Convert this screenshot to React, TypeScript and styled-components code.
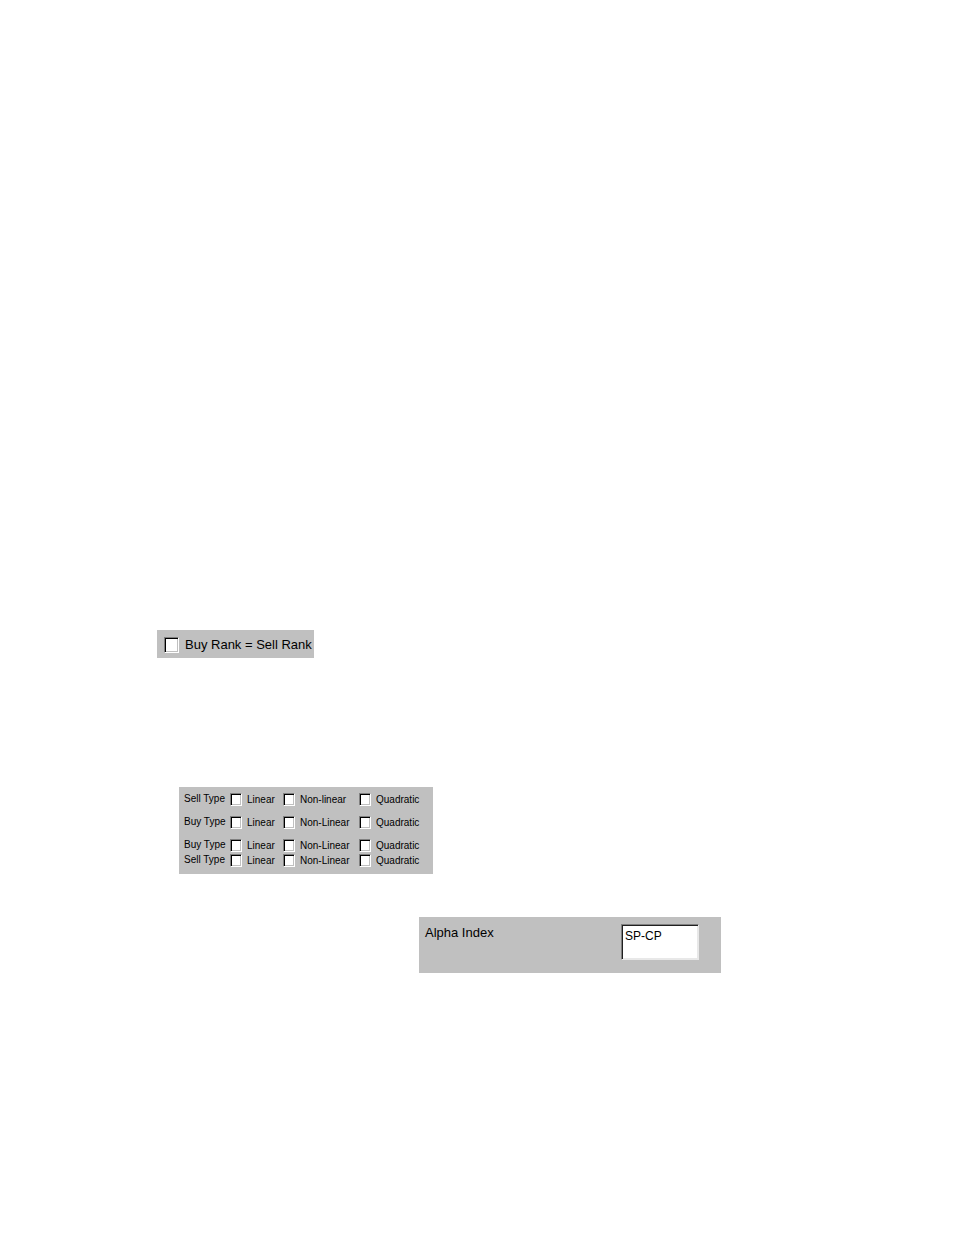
import React from "react";
import styled, { createGlobalStyle } from "styled-components";

const fontStack = '"Liberation Sans", Arial, sans-serif';

const GlobalStyle = createGlobalStyle`
  body {
    margin: 0;
    background: #ffffff;
    color: #000000;
    font-family: ${fontStack};
  }
`;

const Page = styled.main`
  display: flex;
  flex-direction: column;
  align-items: flex-start;
  padding: 630px 16px 262px 157px;
`;

const Panel = styled.section`
  box-sizing: border-box;
  max-width: 100%;
  background: #c0c0c0;
`;

const RankPanel = styled(Panel)`
  padding: 6px 2px 5px 7px;
`;

const TypePanel = styled(Panel)`
  width: 254px;
  margin: 129px 0 0 22px;
  padding: 5px 5px 6px;
`;

const AlphaPanel = styled(Panel)`
  display: flex;
  align-items: flex-start;
  justify-content: space-between;
  width: 302px;
  margin: 43px 0 0 262px;
  padding: 7px 22px 13px 6px;
  font-size: 13px;
  line-height: 17px;
`;

const CheckLabel = styled.label<{ $large?: boolean }>`
  display: flex;
  align-items: center;
  gap: ${(p) => (p.$large ? 6 : 5)}px;
  font-size: ${(p) => (p.$large ? 13 : 10)}px;
  line-height: ${(p) => (p.$large ? 17 : 15)}px;
  white-space: nowrap;
`;

const CheckBox = styled.input<{ $large?: boolean }>`
  appearance: none;
  box-sizing: border-box;
  flex: none;
  width: ${(p) => (p.$large ? 15 : 12)}px;
  height: ${(p) => (p.$large ? 16 : 13)}px;
  margin: 0;
  background: #ffffff;
  border: 1px solid;
  border-color: #808080 #ffffff #ffffff #808080;
  box-shadow: inset 1px 1px 0 #000000, inset -1px -1px 0 #c0c0c0;

  &:checked {
    background: #000000;
  }
`;

const TypeRow = styled.div<{ $spaced: boolean }>`
  display: grid;
  grid-template-columns: 46px 53px 76px 1fr;
  margin-bottom: ${(p) => (p.$spaced ? 8 : 0)}px;
`;

const TypeName = styled.span`
  font-size: 10px;
  line-height: 13px;
  white-space: nowrap;
`;

const AlphaLabel = styled.label`
  white-space: nowrap;
`;

const AlphaField = styled.textarea`
  box-sizing: border-box;
  width: 78px;
  height: 36px;
  padding: 3px;
  resize: none;
  overflow: hidden;
  border: 1px solid;
  border-color: #808080 #e8e8e8 #e8e8e8 #808080;
  border-radius: 0;
  box-shadow: inset 1px 1px 0 #202020, inset -1px -1px 0 #e8e8e8;
  background: #ffffff;
  color: #000000;
  font: 12px/16px ${fontStack};
`;

const rows = [
  { name: "Sell Type", options: ["Linear", "Non-linear", "Quadratic"], spaced: true },
  { name: "Buy Type", options: ["Linear", "Non-Linear", "Quadratic"], spaced: true },
  { name: "Buy Type", options: ["Linear", "Non-Linear", "Quadratic"], spaced: false },
  { name: "Sell Type", options: ["Linear", "Non-Linear", "Quadratic"], spaced: false },
];

export default function App() {
  return (
    <>
      <GlobalStyle />
      <Page>
        <RankPanel>
          <CheckLabel $large>
            <CheckBox type="checkbox" $large />
            Buy Rank = Sell Rank
          </CheckLabel>
        </RankPanel>
        <TypePanel>
          {rows.map((row, i) => (
            <TypeRow key={i} $spaced={row.spaced} role="group" aria-label={row.name}>
              <TypeName>{row.name}</TypeName>
              {row.options.map((option) => (
                <CheckLabel key={option}>
                  <CheckBox type="checkbox" />
                  {option}
                </CheckLabel>
              ))}
            </TypeRow>
          ))}
        </TypePanel>
        <AlphaPanel>
          <AlphaLabel htmlFor="alpha-index">Alpha Index</AlphaLabel>
          <AlphaField id="alpha-index" defaultValue="SP-CP" />
        </AlphaPanel>
      </Page>
    </>
  );
}
